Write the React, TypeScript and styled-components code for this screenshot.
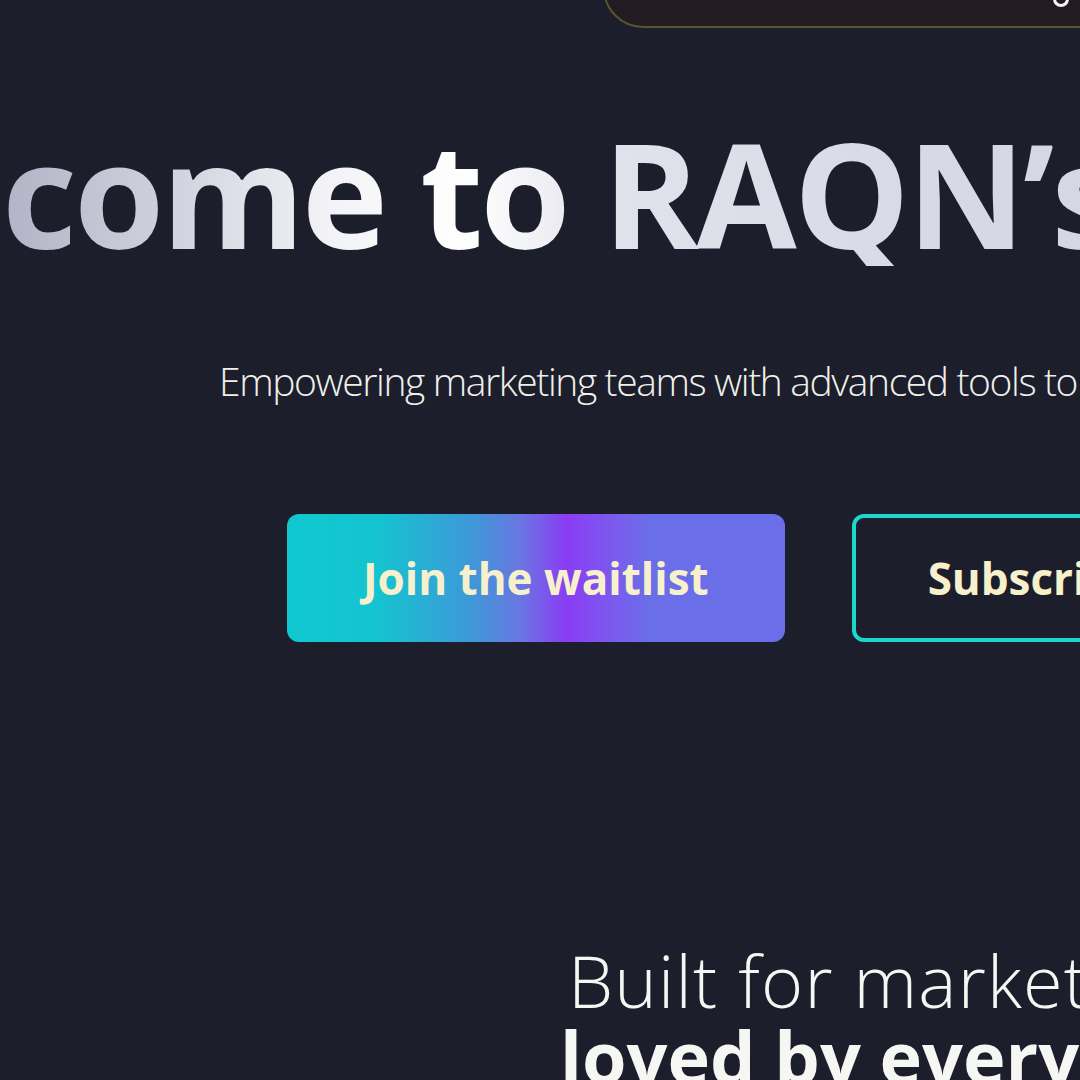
import React from 'react';
import styled, { createGlobalStyle } from 'styled-components';

const Global = createGlobalStyle`
  html, body { margin: 0; padding: 0; background: #1c1e2b; }
  body { overflow: hidden; }
`;

const Viewport = styled.div`
  width: 1080px;
  height: 1080px;
  overflow: hidden;
  background: #1c1e2b;
  font-family: "Open Sans", "Noto Sans", sans-serif;
  color: #f2f0e4;
`;

const Stage = styled.div`
  display: flex;
  flex-direction: column;
  align-items: flex-start;
`;

const Nav = styled.nav`
  margin-top: -52px;
  margin-left: 603px;
  width: 900px;
  height: 80px;
  box-sizing: border-box;
  border: 2px solid #57562f;
  border-radius: 40px;
  background: #221b21;
  display: flex;
  align-items: flex-end;
  padding: 0 0 19px 448px;
`;

const NavIcon = styled.span`
  width: 16px;
  height: 16px;
  border-radius: 50%;
  border: 3px solid #f4f4f0;
  box-sizing: border-box;
`;

const Heading = styled.h1`
  margin: 92px 0 0 -261px;
  font-size: 146px;
  line-height: 1;
  font-weight: 700;
  white-space: nowrap;
  letter-spacing: -3px;
  background: linear-gradient(90deg, #b2b2c6 260px, #cfcfdc 420px, #f4f4f8 600px, #ffffff 730px, #e2e2ec 870px, #d6d6e4 1300px);
  -webkit-background-clip: text;
  background-clip: text;
  color: transparent;
`;

const Subtitle = styled.p`
  margin: 91px 0 0 219px;
  font-size: 39px;
  line-height: 48px;
  font-weight: 300;
  letter-spacing: -1.4px;
  white-space: nowrap;
  color: #f0f0ea;
`;

const Actions = styled.div`
  margin: 109px 0 0 287px;
  display: flex;
  gap: 67px;
`;

const Button = styled.button<{ $variant: 'primary' | 'outline' }>`
  height: 128px;
  box-sizing: border-box;
  border-radius: 12px;
  font-family: "Open Sans", sans-serif;
  font-size: 44px;
  font-weight: 700;
  color: #f6f0cc;
  white-space: nowrap;
  display: flex;
  align-items: center;
  justify-content: center;
  cursor: pointer;
  padding: ${p => (p.$variant === 'outline' ? '0 72px' : '0 76px')};
  border: ${p => (p.$variant === 'outline' ? '4px solid #1cd8cc' : 'none')};
  background: ${p =>
    p.$variant === 'outline'
      ? 'transparent'
      : 'linear-gradient(90deg, #10c8d0 0%, #14c4d0 18%, #3e98d8 37%, #6a76e2 47%, #8a3cf4 56%, #7a5cee 66%, #6a6ee8 73%, #6a6ee8 100%)'};
`;

const Tagline = styled.h2`
  margin: 300px 0 0 560px;
  font-size: 72px;
  line-height: 76px;
  white-space: nowrap;
  color: #f6f6f2;
`;

const Light = styled.span`
  display: block;
  font-weight: 300;
  padding-left: 8px;
  letter-spacing: 1.2px;
`;

const Bold = styled.span`
  display: block;
  font-weight: 700;
`;

export default function App() {
  return (
    <>
      <Global />
      <Viewport>
        <Stage>
          <Nav>
            <NavIcon />
          </Nav>
          <Heading>Welcome to RAQN’s Platform</Heading>
          <Subtitle>Empowering marketing teams with advanced tools to grow faster</Subtitle>
          <Actions>
            <Button $variant="primary">Join the waitlist</Button>
            <Button $variant="outline">Subscribe</Button>
          </Actions>
          <Tagline>
            <Light>Built for marketing teams,</Light>
            <Bold>loved by everyone</Bold>
          </Tagline>
        </Stage>
      </Viewport>
    </>
  );
}
